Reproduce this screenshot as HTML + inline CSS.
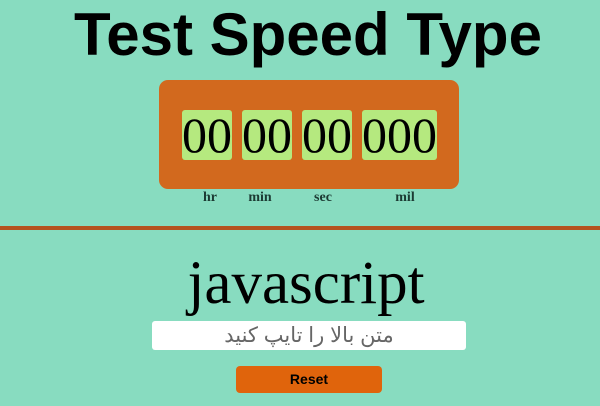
<!DOCTYPE html>
<html><head><meta charset="utf-8"><style>
body{margin:0;width:600px;height:406px;background:#88dcc0;position:relative;overflow:hidden;font-family:"Liberation Serif",serif}
.a{position:absolute}
h1{position:absolute;left:8px;width:600px;top:0px;margin:0;text-align:center;font:bold 60px/70px "Liberation Sans",sans-serif;color:#000}
.box{left:159px;top:80px;width:300px;height:109px;background:#d2691e;border-radius:9px}
.d{top:110px;height:50px;background:#b5e97f;border-radius:3px;font-size:50px;line-height:50px;text-align:center;color:#000;overflow:hidden}
.l{top:190px;font-weight:bold;font-size:14px;color:#1c3b33;text-align:center;width:40px}
.line{left:0;top:226px;width:600px;height:4px;background:#b5531f}
.js{left:6px;width:600px;top:250px;text-align:center;font-size:61px;line-height:68px}
.in{left:152px;top:321px;width:314px;height:29px;background:#fff;border-radius:3px;font-family:"Liberation Sans","Noto Sans CJK SC",sans-serif;font-size:21px;color:#666;text-align:center;line-height:29px}
.btn{left:236px;top:366px;width:146px;height:27px;background:#e0640c;border-radius:4px;font:bold 14px/27px "Liberation Sans",sans-serif;text-align:center;color:#000}
</style></head><body>
<h1>Test Speed Type</h1>
<div class="a box"></div>
<div class="a d" style="left:182px;width:50px">00</div>
<div class="a d" style="left:242px;width:50px">00</div>
<div class="a d" style="left:302px;width:50px">00</div>
<div class="a d" style="left:362px;width:75px">000</div>
<div class="a l" style="left:190px">hr</div>
<div class="a l" style="left:240px">min</div>
<div class="a l" style="left:303px">sec</div>
<div class="a l" style="left:385px">mil</div>
<div class="a line"></div>
<div class="a js">javascript</div>
<div class="a in" dir="rtl">متن بالا را تایپ کنید</div>
<div class="a btn">Reset</div>
</body></html>
